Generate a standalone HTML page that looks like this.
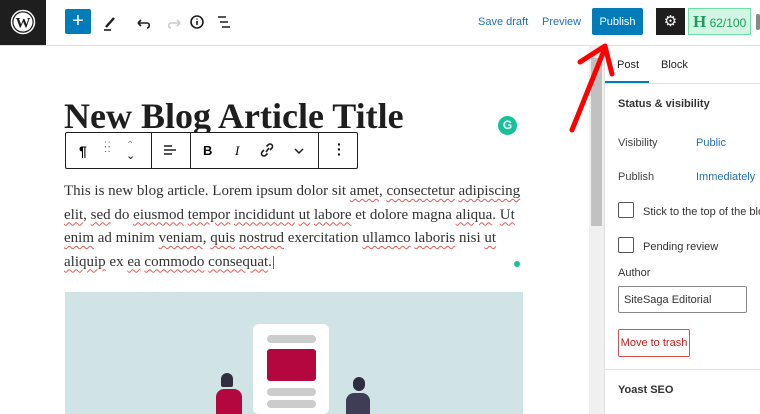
<!DOCTYPE html>
<html><head><meta charset="utf-8"><style>
*{margin:0;padding:0;box-sizing:border-box}
body{width:760px;height:414px;overflow:hidden;background:#fff;font-family:"Liberation Sans",sans-serif;position:relative}
.a{position:absolute}
.ui{font-size:11px;color:#1e1e1e}
.blue{color:#2271b1}
.serif{font-family:"Liberation Serif",serif}
.sq{text-decoration:underline wavy #e05a5a;text-decoration-thickness:1px;text-underline-offset:3px}
</style></head><body>
<div class="a" style="left:0;top:0;width:46px;height:45px;background:#1e1e1e"></div>
<svg class="a" style="left:10px;top:9px" width="26" height="26" viewBox="0 0 26 26"><circle cx="13" cy="13" r="11.5" fill="none" stroke="#fff" stroke-width="1.5"/><circle cx="13" cy="13" r="9.5" fill="#fff"/><text x="13" y="18.5" text-anchor="middle" font-family="Liberation Serif" font-weight="bold" font-size="15" fill="#1e1e1e">W</text></svg>
<div class="a" style="left:0;top:45px;width:760px;height:1px;background:#e0e0e0"></div>
<div class="a" style="left:65px;top:9px;width:26px;height:25px;background:#007cba;border-radius:2px;color:#fff;font-size:20px;line-height:24px;text-align:center">+</div>
<svg class="a" style="left:100px;top:10px" width="140" height="24" viewBox="0 0 140 24" fill="none" stroke="#1e1e1e" stroke-width="1.6">
<path d="M6 17 L14 8" stroke-width="2.4"/><path d="M4 20h7"/>
<path d="M48 13h-10 M38 13l3-3 M38 13l3 3 M47 13c3 0 3 5 0 5" />
<path d="M70 13h10 M80 13l-3-3 M80 13l-3 3 M71 13c-3 0-3 5 0 5" stroke="#ccc"/>
<circle cx="97" cy="12" r="6"/><path d="M97 11v4 M97 8.5v1"/>
<path d="M118 7h8 M120 12h8 M122 17h8"/>
</svg>
<div class="a ui blue" style="left:478px;top:16px">Save draft</div>
<div class="a ui blue" style="left:542px;top:16px">Preview</div>
<div class="a" style="left:592px;top:8px;width:51px;height:27px;background:#007cba;border-radius:2px;color:#fff;font-size:11px;padding-top:8px;text-align:center">Publish</div>
<div class="a" style="left:656px;top:8px;width:29px;height:27px;background:#1e1e1e;color:#fff;font-size:15px;line-height:27px;text-align:center">⚙</div>
<div class="a" style="left:688px;top:8px;width:63px;height:27px;background:#d3f6e4;border:1px solid #6ee0a6;color:#1b9e5c;font-size:12px;line-height:25px;padding-left:4px"><b style="font-family:'Liberation Serif';font-size:17px">H</b> 62/100</div>
<div class="a" style="left:756px;top:14px;width:4px;height:16px;background:#888;border-radius:2px"></div>
<div class="a serif" style="left:64px;top:95px;font-size:36px;font-weight:bold;color:#1e1e1e;white-space:nowrap">New Blog Article Title</div>
<div class="a" style="left:498px;top:116px;width:19px;height:19px;border-radius:50%;background:#15c39a;color:#fff;font-size:12px;font-weight:bold;text-align:center;line-height:19px">G</div>
<div class="a" style="left:65px;top:132px;width:293px;height:37px;border:1px solid #1e1e1e;background:#fff;border-radius:2px"></div>
<div class="a" style="left:151px;top:132px;width:1px;height:37px;background:#1e1e1e"></div>
<div class="a" style="left:190px;top:132px;width:1px;height:37px;background:#1e1e1e"></div>
<div class="a" style="left:318px;top:132px;width:1px;height:37px;background:#1e1e1e"></div>
<div class="a" style="left:79px;top:143px;font-size:14px;font-weight:bold">¶</div>
<div class="a" style="left:104px;top:142px;font-size:10px;line-height:5px;color:#555;letter-spacing:1px">::<br>::<br></div>
<div class="a" style="left:126px;top:140px;font-size:10px;color:#999">⌃</div>
<div class="a" style="left:126px;top:149px;font-size:11px">⌄</div>
<svg class="a" style="left:162px;top:143px" width="16" height="14" stroke="#1e1e1e" stroke-width="1.5"><path d="M2 3h8 M2 7h12 M2 11h8"/></svg>
<div class="a" style="left:203px;top:143px;font-size:13px;font-weight:bold">B</div>
<div class="a" style="left:235px;top:143px;font-size:13px;font-style:italic;font-family:'Liberation Serif'">I</div>
<svg class="a" style="left:259px;top:142px" width="16" height="16" fill="none" stroke="#1e1e1e" stroke-width="1.6"><path d="M7 10l3-4 M5 8l-2 2a2.5 2.5 0 0 0 3.5 3.5l2-2 M11 8l2-2a2.5 2.5 0 0 0-3.5-3.5l-2 2"/></svg>
<svg class="a" style="left:294px;top:147px" width="10" height="8" fill="none" stroke="#1e1e1e" stroke-width="1.5"><path d="M1 2l4 4 4-4"/></svg>
<div class="a" style="left:337px;top:142px;font-size:14px;line-height:5px;font-weight:bold">·<br>·<br>·</div>
<div class="a serif" style="left:64px;top:180px;white-space:nowrap;font-size:15px;line-height:23.5px;color:#333">This is new blog article. Lorem ipsum dolor sit <span class="sq">amet</span>, <span class="sq">consectetur</span> <span class="sq">adipiscing</span><br><span class="sq">elit</span>, <span class="sq">sed</span> do <span class="sq">eiusmod</span> <span class="sq">tempor</span> <span class="sq">incididunt</span> <span class="sq">ut</span> <span class="sq">labore</span> et dolore magna <span class="sq">aliqua</span>. <span class="sq">Ut</span><br><span class="sq">enim</span> ad minim <span class="sq">veniam</span>, <span class="sq">quis</span> <span class="sq">nostrud</span> exercitation <span class="sq">ullamco</span> <span class="sq">laboris</span> nisi <span class="sq">ut</span><br><span class="sq">aliquip</span> ex <span class="sq">ea</span> <span class="sq">commodo</span> <span class="sq">consequat</span>.|</div>
<div class="a" style="left:514px;top:261px;width:6px;height:6px;border-radius:50%;background:#15c39a"></div>
<div class="a" style="left:65px;top:292px;width:458px;height:122px;background:#d0e4e6"></div>
<div class="a" style="left:253px;top:324px;width:76px;height:90px;background:#fff;border-radius:6px"></div>
<div class="a" style="left:267px;top:335px;width:49px;height:8px;background:#ccc;border-radius:4px"></div>
<div class="a" style="left:267px;top:349px;width:49px;height:32px;background:#b5073f;border-radius:3px"></div>
<div class="a" style="left:267px;top:388px;width:49px;height:8px;background:#ccc;border-radius:4px"></div>
<div class="a" style="left:267px;top:400px;width:49px;height:8px;background:#ccc;border-radius:4px"></div>
<div class="a" style="left:221px;top:373px;width:12px;height:14px;background:#2f2e41;border-radius:6px 6px 2px 2px"></div>
<div class="a" style="left:216px;top:389px;width:26px;height:25px;background:#b5073f;border-radius:8px 8px 0 0"></div>
<div class="a" style="left:353px;top:377px;width:12px;height:14px;background:#2f2e41;border-radius:6px"></div>
<div class="a" style="left:346px;top:393px;width:24px;height:21px;background:#3f3d56;border-radius:8px 8px 0 0"></div>
<div class="a" style="left:589px;top:46px;width:15px;height:368px;background:#f0f0f0"></div>
<div class="a" style="left:591px;top:58px;width:11px;height:168px;background:#c1c1c1"></div>
<div class="a" style="left:604px;top:46px;width:1px;height:368px;background:#e0e0e0"></div>
<div class="a ui" style="left:617px;top:59px">Post</div>
<div class="a ui" style="left:661px;top:59px">Block</div>
<div class="a" style="left:605px;top:81px;width:44px;height:2px;background:#007cba"></div>
<div class="a" style="left:605px;top:83px;width:155px;height:1px;background:#e0e0e0"></div>
<div class="a ui" style="left:618px;top:98px;font-weight:bold;color:#333">Status &amp; visibility</div>
<div class="a ui" style="left:618px;top:137px;color:#444">Visibility</div>
<div class="a ui blue" style="left:696px;top:137px">Public</div>
<div class="a ui" style="left:618px;top:171px;color:#444">Publish</div>
<div class="a ui blue" style="left:696px;top:171px">Immediately</div>
<div class="a" style="left:618px;top:202px;width:16px;height:16px;border:1px solid #555;border-radius:2px"></div>
<div class="a ui" style="left:643px;top:206px;white-space:nowrap;color:#333">Stick to the top of the blog</div>
<div class="a" style="left:618px;top:237px;width:16px;height:16px;border:1px solid #555;border-radius:2px"></div>
<div class="a ui" style="left:643px;top:241px;color:#333">Pending review</div>
<div class="a ui" style="left:618px;top:267px;color:#333">Author</div>
<div class="a ui" style="left:618px;top:286px;width:129px;height:27px;border:1px solid #888;border-radius:2px;padding:7px 5px;color:#333">SiteSaga Editorial</div>
<div class="a" style="left:618px;top:329px;width:72px;height:28px;border:1px solid #d94f4f;border-radius:2px;color:#cc1818;font-size:11px;line-height:26px;text-align:center">Move to trash</div>
<div class="a" style="left:605px;top:369px;width:155px;height:1px;background:#e0e0e0"></div>
<div class="a ui" style="left:618px;top:384px;font-weight:bold;color:#333">Yoast SEO</div>
<svg class="a" style="left:560px;top:40px" width="70" height="100" fill="none" stroke="#f00" stroke-width="5" stroke-linecap="round" stroke-linejoin="round"><path d="M12 90 L45 8 M20 22 L45 6 L52 34"/></svg>
</body></html>
